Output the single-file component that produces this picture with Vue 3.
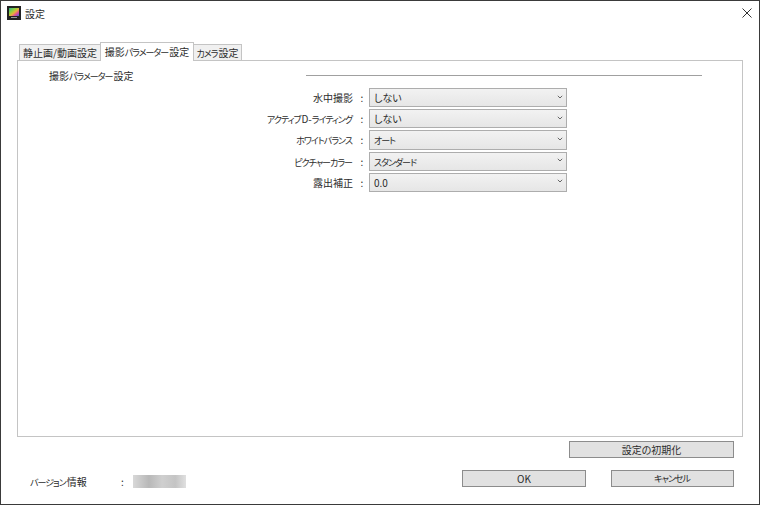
<template>
  <div class="window">
    <!-- タイトルバー -->
    <header class="titlebar">
      <svg class="app-icon" width="14" height="14" viewBox="0 0 14 14">
        <defs>
          <linearGradient id="rainbow" x1="0" y1="0" x2="1" y2="1">
            <stop offset="0" stop-color="#2fb58a" />
            <stop offset=".35" stop-color="#8fd13f" />
            <stop offset=".55" stop-color="#e8b13a" />
            <stop offset=".75" stop-color="#e0489a" />
            <stop offset="1" stop-color="#3b6fe0" />
          </linearGradient>
        </defs>
        <rect width="14" height="14" fill="#222" />
        <rect x="2" y="2" width="10" height="8" fill="url(#rainbow)" />
        <rect x="4" y="11" width="6" height="1" fill="#999" />
      </svg>
      <span class="title"><Jp text="設定" /></span>
      <svg class="close" width="10" height="10" viewBox="0 0 10 10">
        <path d="M.5.5l9 9M9.5.5l-9 9" stroke="#333" stroke-width="1" fill="none" />
      </svg>
    </header>

    <div class="tabs">
      <div
        v-for="tab in tabs"
        :key="tab.label"
        class="tab"
        :class="{ active: tab.active }"
        :style="{ width: tab.width + 'px' }"
      ><Jp :text="tab.label" /></div>
    </div>

    <section class="panel">
      <div class="group-head">
        <span class="group-title"><Jp text="撮影パラメーター設定" /></span>
        <span class="group-line"></span>
      </div>
      <div class="form">
        <div v-for="row in rows" :key="row.label" class="row">
          <span class="label"><Jp :text="row.label" /></span>
          <span class="colon">:</span>
          <div class="select">
            <span><Jp :text="row.value" /></span>
            <svg class="chevron" width="6" height="4" viewBox="0 0 6 4">
              <path d="M.8.8L3 3l2.2-2.2" stroke="#666" fill="none" />
            </svg>
          </div>
        </div>
      </div>
    </section>

    <div class="reset-line">
      <button class="btn reset"><Jp text="設定の初期化" /></button>
    </div>

    <footer class="footer">
      <span class="version-label"><Jp text="バージョン情報" /></span>
      <span class="version-colon">:</span>
      <span class="version-blur"></span>
      <button class="btn ok">OK</button>
      <button class="btn cancel"><Jp text="キャンセル" /></button>
    </footer>
  </div>
</template>

<script setup>
import { h } from 'vue'

// 参考画像のカナは幅が狭いので、カナだけ別クラスにして詰める
const Jp = (props) =>
  props.text
    .match(/[\u30a0-\u30ff]+|[^\u30a0-\u30ff]+/g)
    .map((part) =>
      h('span', { class: /[\u30a0-\u30ff]/.test(part) ? 'kana' : null }, part)
    )
Jp.props = ['text']

const tabs = [
  { label: '静止画/動画設定', width: 82 },
  { label: '撮影パラメーター設定', width: 94, active: true },
  { label: 'カメラ設定', width: 49 },
]

const rows = [
  { label: '水中撮影', value: 'しない' },
  { label: 'アクティブD-ライティング', value: 'しない' },
  { label: 'ホワイトバランス', value: 'オート' },
  { label: 'ピクチャーカラー', value: 'スタンダード' },
  { label: '露出補正', value: '0.0' },
]
</script>

<style>
html, body {
  margin: 0;
  background: #fff;
}

.kana {
  font-size: 9px;
  letter-spacing: -1px;
  margin-right: 1px;
}
</style>

<style scoped>
.window {
  box-sizing: border-box;
  width: 760px;
  height: 505px;
  background: #fff;
  border: 1px solid #3a3a3a;
  font-family: "Noto Sans CJK JP", "Liberation Sans", sans-serif;
  font-size: 10px;
  font-feature-settings: "palt";
  color: #2c2c2c;
  overflow: hidden;
}

.titlebar {
  display: flex;
  align-items: center;
  height: 24px;
  padding: 0 7px 0 6px;
}

.app-icon {
  margin-right: 4px;
}

.title {
  flex: 1;
}

.tabs {
  display: flex;
  align-items: flex-end;
  height: 35px;
  padding-left: 18px;
  position: relative;
  z-index: 1;
}

.tab {
  box-sizing: border-box;
  height: 16px;
  line-height: 15px;
  text-align: center;
  white-space: nowrap;
  background: #f0f0f0;
  border: 1px solid #c4c4c4;
  border-bottom: none;
}

.tab.active {
  height: 19px;
  line-height: 17px;
  background: #fff;
  margin: 0 -1px -1px;
  position: relative;
}

.panel {
  box-sizing: border-box;
  width: 726px;
  height: 377px;
  margin-left: 16px;
  border: 1px solid #c4c4c4;
}

.group-head {
  display: flex;
  align-items: center;
  height: 15px;
  margin-top: 7px;
  padding-left: 31px;
}

.group-title {
  width: 257px;
}

.group-line {
  width: 396px;
  height: 1px;
  background: #a0a0a0;
}

.form {
  display: flex;
  flex-direction: column;
  gap: 2px;
  margin-top: 5px;
}

.row {
  display: grid;
  grid-template-columns: 335px 16px 198px;
  align-items: center;
  height: 19.2px;
}

.label {
  text-align: right;
  white-space: nowrap;
}

.colon {
  text-align: center;
  padding-left: 2px;
}

.select {
  box-sizing: border-box;
  display: flex;
  align-items: center;
  justify-content: space-between;
  height: 100%;
  padding: 0 3px 0 4px;
  background: linear-gradient(#f2f2f2, #e6e6e6);
  border: 1px solid #adadad;
}

.chevron {
  margin-bottom: 2px;
}

.reset-line {
  display: flex;
  justify-content: flex-end;
  padding: 4px 25px 0 0;
}

.btn {
  box-sizing: border-box;
  height: 17px;
  padding: 0;
  font: inherit;
  font-feature-settings: "palt";
  line-height: 14px;
  color: #2c2c2c;
  background: #e1e1e1;
  border: 1px solid #8c8c8c;
}

.reset {
  width: 165px;
}

.footer {
  display: flex;
  align-items: center;
  height: 17px;
  margin-top: 12px;
  padding-left: 29px;
}

.version-label {
  width: 91px;
  margin-top: 6px;
}

.version-colon {
  width: 12px;
  margin-top: 6px;
}

.version-blur {
  width: 53px;
  height: 13px;
  margin: 6px 276px 0 0;
  background: linear-gradient(90deg, #d8d8d8, #b8b8b8 30%, #cfcfcf 55%, #c4c4c4 80%, #e0e0e0);
  filter: blur(0.6px);
}

.ok {
  width: 124px;
  margin-right: 25px;
}

.cancel {
  width: 123px;
}
</style>
